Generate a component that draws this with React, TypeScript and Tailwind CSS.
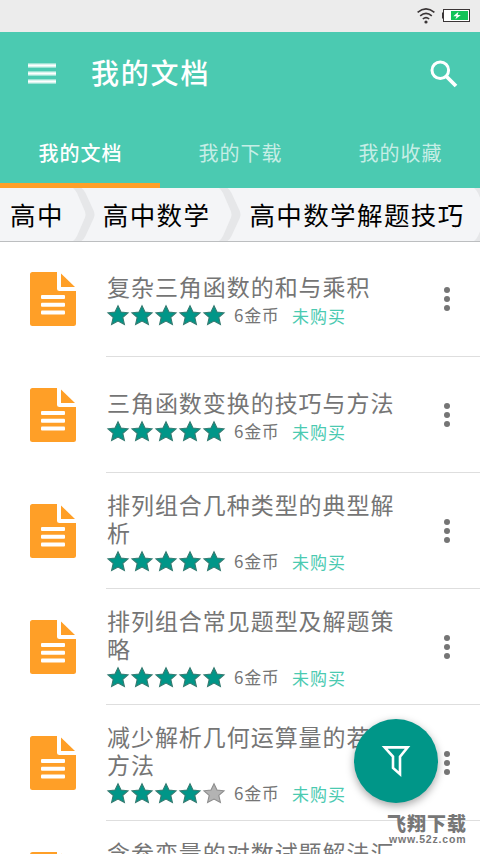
import { useState } from 'react';

interface Doc {
  title: string;
  rating: number;
  price: number;
}

const TABS = ['我的文档', '我的下载', '我的收藏'];

const CRUMBS = ['高中', '高中数学', '高中数学解题技巧'];

const DOCS: Doc[] = [
  { title: '复杂三角函数的和与乘积', rating: 5, price: 6 },
  { title: '三角函数变换的技巧与方法', rating: 5, price: 6 },
  { title: '排列组合几种类型的典型解析', rating: 5, price: 6 },
  { title: '排列组合常见题型及解题策略', rating: 5, price: 6 },
  { title: '减少解析几何运算量的若干方法', rating: 4, price: 6 },
  { title: '含参变量的对数试题解法汇总', rating: 5, price: 6 },
];

function StatusBar() {
  return (
    <div className="h-8 shrink-0 bg-[#ececec] flex items-center justify-end pr-[10px] gap-[7px]">
      <svg width="18" height="16" viewBox="0 0 18 16" fill="none" stroke="#3a3536" strokeWidth="1.6">
        <path d="M0.6 4.4Q9 -2.6 17.4 4.4" />
        <path d="M3.2 7.8Q9 2.8 14.8 7.8" />
        <path d="M5.8 11Q9 8.4 12.2 11" />
        <circle cx="9" cy="14" r="1.6" fill="#3a3536" stroke="none" />
      </svg>
      <svg width="28" height="13" viewBox="0 0 28 13" className="-mt-px">
        <rect x="0" y="3.5" width="2" height="6" fill="#3a3536" />
        <rect x="1.5" y="0.5" width="26" height="12" fill="#fff" stroke="#3a3536" />
        <rect x="9" y="2" width="17" height="9" fill="#12c357" />
        <path d="M16.5 2.8L11.3 7.2H14.6L13.4 10.2L18.8 6H15.6Z" fill="#fff" />
      </svg>
    </div>
  );
}

function Star({ on }: { on: boolean }) {
  return (
    <svg width="24" height="24" viewBox="0 0 24 24">
      <path
        d="M12 2.8L15 9.1L22 9.8L16.8 14.4L18.4 21.4L12 18L5.6 21.4L7.2 14.4L2 9.8L9 9.1Z"
        fill={on ? '#009688' : '#b3b3b3'}
        stroke={on ? '#35796f' : '#8c8c8c'}
        strokeWidth="1.1"
      />
    </svg>
  );
}

function DocIcon() {
  return (
    <svg width="46" height="54" viewBox="0 0 46 54" className="shrink-0">
      <path
        d="M2.5 0H27V16.5Q27 19 29.5 19H46V51.5Q46 54 43.5 54H2.5Q0 54 0 51.5V2.5Q0 0 2.5 0Z"
        fill="#ff9f27"
      />
      <path d="M31 1.5L45 15H31Z" fill="#ff9f27" />
      <g fill="#fff">
        <rect x="11" y="23" width="24" height="4" rx="1" />
        <rect x="11" y="30.7" width="24" height="4" rx="1" />
        <rect x="11" y="38.4" width="24" height="4" rx="1" />
      </g>
    </svg>
  );
}

function Chevron() {
  return (
    <svg width="22" height="53" viewBox="0 0 22 53" className="shrink-0">
      <path
        d="M0 0H8.5Q11 2 12.5 5L21 23.5Q22 26.5 21 29.5L12.5 48Q11 51 8.5 53H0Q2.5 51 4 48L12 29.5Q13 26.5 12 23.5L4 5Q2.5 2 0 0Z"
        fill="#e6e7e9"
      />
    </svg>
  );
}

function DocRow({ doc }: { doc: Doc }) {
  return (
    <div className="h-[116px] shrink-0 flex items-stretch pl-[30px]">
      <div className="flex items-center w-[76px] shrink-0 pb-px">
        <DocIcon />
      </div>
      <div className="flex-1 flex items-center border-b border-[#dedede]">
        <div className="w-[300px] pl-px pt-[4px]">
          <h3 className="relative -top-px text-[23px] leading-7 tracking-[0.95px] text-[#757575]">{doc.title}</h3>
          <div className="h-7 flex items-center">
            <div className="flex -ml-px">
              {[1, 2, 3, 4, 5].map((n) => (
                <Star key={n} on={n <= doc.rating} />
              ))}
            </div>
            <span className="ml-2 w-[58px] text-[17px] leading-6 tracking-[0.7px] text-[#757575]">
              {doc.price}金币
            </span>
            <span className="text-[17px] leading-6 tracking-[1px] pt-[2px] text-[#4bcab1]">未购买</span>
          </div>
        </div>
        <button className="ml-[38px] h-7 w-[6px] flex flex-col items-center justify-center gap-[3px]">
          <i className="size-[6px] shrink-0 rounded-full bg-[#757575]" />
          <i className="size-[6px] shrink-0 rounded-full bg-[#757575]" />
          <i className="size-[6px] shrink-0 rounded-full bg-[#757575]" />
        </button>
      </div>
    </div>
  );
}

export default function App() {
  const [tab, setTab] = useState(0);

  return (
    <div className="relative w-[480px] h-[854px] overflow-hidden flex flex-col bg-white font-['Noto_Sans_CJK_SC',sans-serif]">
      <StatusBar />

      {/* 顶部标题栏 */}
      <header className="h-[156px] shrink-0 bg-[#4bcab1] text-white flex flex-col">
        <div className="h-[84px] flex items-center pl-7 pr-[22px]">
          <svg width="28" height="22" viewBox="0 0 28 22" className="shrink-0">
            <path d="M0 2.5H28M0 10.5H28M0 18.5H28" stroke="#fff" strokeOpacity="0.6" strokeWidth="4.4" />
            <path d="M0 2.5H28M0 10.5H28M0 18.5H28" stroke="#fff" strokeWidth="2" />
          </svg>
          <h1 className="ml-[35px] -mt-1 flex-1 text-[28px] leading-10 tracking-[1.8px] font-medium">我的文档</h1>
          <svg width="28" height="28" viewBox="0 0 28 28" fill="none" stroke="#fff">
            <circle cx="10.3" cy="10.3" r="8.3" strokeWidth="3" />
            <path d="M16.5 16.5L26 26" strokeWidth="3.8" />
          </svg>
        </div>
        <nav className="flex-1 flex">
          {TABS.map((t, i) => (
            <button
              key={t}
              onClick={() => setTab(i)}
              className={
                'flex-1 pt-[6px] pl-px border-b-[5px] text-[20px] tracking-[1px] ' +
                (i === tab ? 'border-[#ff9f27] font-medium text-white' : 'border-transparent text-white/70')
              }
            >
              {t}
            </button>
          ))}
        </nav>
      </header>

      {/* 分类路径 */}
      <div className="h-[54px] shrink-0 flex items-center overflow-hidden bg-[#f4f5f7] border-b border-[#bcbec0] pl-[10px]">
        {CRUMBS.map((c) => (
          <div key={c} className="flex items-center shrink-0">
            <span className="-mt-[2px] text-[25.5px] leading-9 tracking-[1.4px] text-black">{c}</span>
            <span className="ml-[9px] mr-[8px]">
              <Chevron />
            </span>
          </div>
        ))}
      </div>

      <main className="-mt-px flex-1 min-h-0 overflow-hidden flex flex-col">
        {DOCS.map((doc) => (
          <DocRow key={doc.title} doc={doc} />
        ))}
      </main>

      {/* 筛选按钮 */}
      <button className="absolute left-[354px] top-[719px] size-[84px] rounded-full bg-[#009688] shadow-[0_3px_8px_rgba(0,0,0,0.35)]">
        <svg width="84" height="84" viewBox="0 0 84 84" fill="none" stroke="#fff" strokeWidth="2.6">
          <path d="M30.6 28.4H53.6L46 37.6V55.2L39 49V37.6Z" />
        </svg>
      </button>

      <div className="absolute left-[387px] top-[812px] w-[84px] text-[#777] whitespace-nowrap">
        <div className="text-[19px] leading-[21px] font-black tracking-[1px]">飞翔下载</div>
        <div className="pl-[2px] text-[10.5px] leading-3 font-bold tracking-[0.8px] font-['Liberation_Sans',sans-serif]">
          www.52z.com
        </div>
      </div>
    </div>
  );
}
